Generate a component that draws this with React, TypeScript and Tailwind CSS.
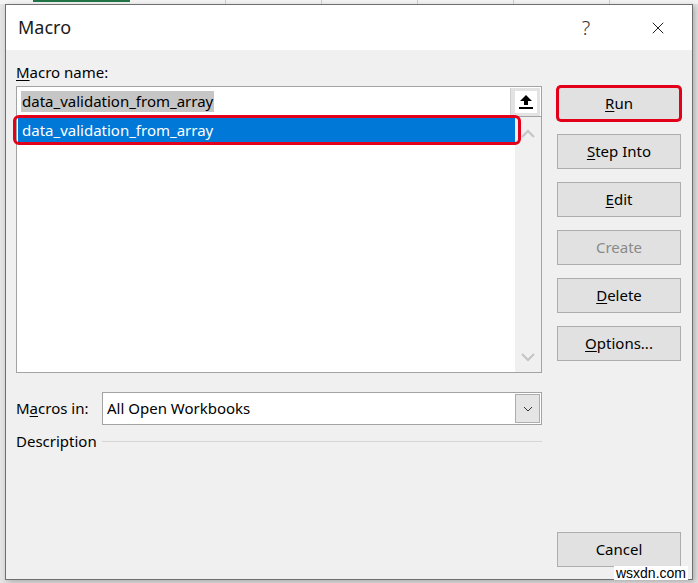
import { X } from 'lucide-react';

const font = "font-['Segoe_UI','Noto_Sans',sans-serif]";

const buttons = [
    { pre: '', key: 'S', rest: 'tep Into', disabled: false },
    { pre: '', key: 'E', rest: 'dit', disabled: false },
    { pre: '', key: '', rest: 'Create', disabled: true },
    { pre: '', key: 'D', rest: 'elete', disabled: false },
    { pre: '', key: 'O', rest: 'ptions...', disabled: false },
];

function Chevron({ up, className }: { up?: boolean; className?: string }) {
    return (
        <svg width="14" height="9" viewBox="0 0 14 9" className={className}>
            <path d={up ? 'M1 8 L7 2 L13 8' : 'M1 1 L7 7 L13 1'} fill="none" stroke="currentColor" strokeWidth="2" />
        </svg>
    );
}

function DialogButton({ children, disabled }: { children: React.ReactNode; disabled?: boolean }) {
    return (
        <div
            className={`w-[124px] h-[35px] flex items-center justify-center bg-[#e1e1e1] border border-[#adadad] text-[15px] ${
                disabled ? 'text-[#8a8a8a]' : 'text-black'
            }`}
        >
            {children}
        </div>
    );
}

export default function App() {
    return (
        <div className={`w-[698px] h-[583px] bg-[#e4e4e4] overflow-hidden relative ${font}`}>
            {/* sheet behind the dialog */}
            <div className="h-[4px] flex bg-[#f4f4f4]">
                <div className="w-[33px]" />
                <div className="w-[97px] h-[2px] bg-[#217346]" />
                <div className="w-[96px] border-r border-[#c8c8c8]" />
                <div className="w-[96px] border-r border-[#c8c8c8]" />
                <div className="w-[96px] border-r border-[#c8c8c8]" />
                <div className="w-[96px] border-r border-[#c8c8c8]" />
                <div className="w-[96px] border-r border-[#c8c8c8]" />
            </div>

            <div className="ml-[5px] w-[688px] h-[576px] border border-[#6f6f6f] bg-[#f0f0f0] flex flex-col shadow-[2px_2px_6px_rgba(0,0,0,0.25)]">
                {/* title bar */}
                <div className="h-[45px] bg-white flex items-center pl-[12px]">
                    <div className="text-[18px] text-[#1a1a1a]">Macro</div>
                    <div className="ml-auto w-[20px] text-[20px] font-light text-[#333] text-center mr-[52px]">?</div>
                    <X size={20} strokeWidth={1.2} className="text-[#222] mr-[24px]" />
                </div>

                <div className="flex flex-1 pl-[10px] pr-[10px]">
                    {/* left column */}
                    <div className="w-[526px] flex flex-col pt-[12px]">
                        <div className="text-[15px] leading-[20px] text-black">
                            <span className="underline underline-offset-2">M</span>acro name:
                        </div>
                        <div className="mt-[4px] h-[31px] border border-[#a3a3a3] bg-white flex items-center pl-[4px]">
                            <span className="bg-[#c6c6c6] text-[15px] leading-[21px] text-black px-[1px]">
                                data_validation_from_array
                            </span>
                            <div className="ml-auto mr-[1px] w-[30px] h-[28px] bg-[#e3e3e3] border-l border-[#cfcfcf] flex items-center justify-center">
                                <div className="w-[22px] h-[22px] bg-white flex items-center justify-center">
                                    <svg width="14" height="15" viewBox="0 0 14 15">
                                        <path d="M7 1 L13 7 L9 7 L9 11 L5 11 L5 7 L1 7 Z" fill="#000" />
                                        <rect x="0" y="13" width="14" height="2" fill="#000" />
                                    </svg>
                                </div>
                            </div>
                        </div>
                        <div className="h-[256px] border-x border-b border-[#a3a3a3] bg-white flex">
                            <div className="flex-1 pt-[1px] pl-[1px]">
                                <div className="relative h-[24px] bg-[#0078d7] text-white text-[15px] flex items-center pl-[4px]">
                                    data_validation_from_array
                                    <div className="absolute -left-[5px] -right-[6px] -top-[3px] -bottom-[3px] border-[3px] border-[#e2001a] rounded-[6px]" />
                                </div>
                            </div>
                            <div className="w-[26px] bg-[#f0f0f0] flex flex-col items-center justify-between pt-[12px] pb-[10px] text-[#c4c4c4]">
                                <Chevron up />
                                <Chevron />
                            </div>
                        </div>

                        <div className="mt-[19px] flex items-center">
                            <div className="w-[86px] text-[15px] text-black">
                                M<span className="underline underline-offset-2">a</span>cros in:
                            </div>
                            <div className="flex-1 h-[33px] border border-[#a3a3a3] bg-white flex items-center pl-[4px]">
                                <span className="text-[15px] text-black">All Open Workbooks</span>
                                <div className="ml-auto mr-[1px] w-[25px] h-[29px] bg-[#e5e5e5] border border-[#adadad] flex items-center justify-center text-[#333]">
                                    <svg width="10" height="6" viewBox="0 0 10 6">
                                        <path d="M1 1 L5 5 L9 1" fill="none" stroke="currentColor" strokeWidth="1" />
                                    </svg>
                                </div>
                            </div>
                        </div>

                        <div className="mt-[6px] flex items-center">
                            <div className="text-[15px] leading-[20px] text-black">Description</div>
                            <div className="flex-1 ml-[5px] h-px bg-[#d6d6d6]" />
                        </div>
                    </div>

                    {/* right column */}
                    <div className="ml-[15px] flex flex-col pt-[36px] pb-[12px] gap-[13px]">
                        <div className="relative">
                            <DialogButton>
                                <span className="underline underline-offset-2">R</span>un
                            </DialogButton>
                            <div className="absolute -left-[1px] -right-[1px] -top-[1px] -bottom-[1px] border-[3px] border-[#e2001a] rounded-[5px]" />
                        </div>
                        {buttons.map((b, i) => (
                            <DialogButton key={i} disabled={b.disabled}>
                                {b.key && <span className="underline underline-offset-2">{b.key}</span>}
                                {b.rest}
                            </DialogButton>
                        ))}
                        <div className="mt-auto">
                            <DialogButton>Cancel</DialogButton>
                        </div>
                    </div>
                </div>
            </div>

            <div className="absolute right-[10px] bottom-[3px] bg-white px-[2px] font-['Liberation_Sans',sans-serif] text-[14px] leading-[14px] text-black">
                wsxdn.com
            </div>
        </div>
    );
}
